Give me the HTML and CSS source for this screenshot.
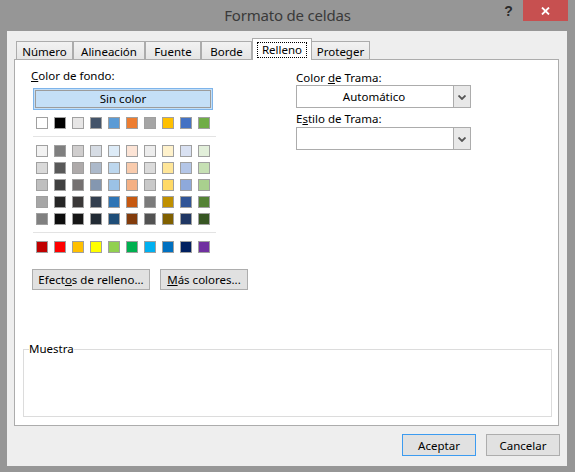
FILE: index.html
```html
<!DOCTYPE html>
<html lang="es">
<head>
<meta charset="utf-8">
<title>Formato de celdas</title>
<link rel="stylesheet" href="styles.css">
</head>
<body>
<div class="window">
  <div class="titlebar">
    <div></div>
    <div class="title">Formato de celdas</div>
    <div class="controls">
      <span class="help">?</span>
      <span class="close"><svg width="9" height="8" viewBox="0 0 9 8"><path d="M1 0.5 L8 7.5 M8 0.5 L1 7.5" stroke="#fff" stroke-width="1.8" fill="none"/></svg></span>
    </div>
  </div>
  <div class="client">
    <div class="tabs">
      <div class="tab t-num">Número</div>
      <div class="tab t-ali">Alineación</div>
      <div class="tab t-fue">Fuente</div>
      <div class="tab t-bor">Borde</div>
      <div class="tab active t-rel"><span class="focus">Relleno</span></div>
      <div class="tab t-pro">Proteger</div>
    </div>
    <div class="panel">
      <div class="top">
        <div class="left">
          <div class="label"><u>C</u>olor de fondo:</div>
          <div class="nocolor"><div class="nocolor-inner">Sin color</div></div>
          <div class="swatches row1">
            <span class="sw" style="background:#FFFFFF"></span>
            <span class="sw" style="background:#000000"></span>
            <span class="sw" style="background:#E7E6E6"></span>
            <span class="sw" style="background:#44546A"></span>
            <span class="sw" style="background:#5B9BD5"></span>
            <span class="sw" style="background:#ED7D31"></span>
            <span class="sw" style="background:#A5A5A5"></span>
            <span class="sw" style="background:#FFC000"></span>
            <span class="sw" style="background:#4472C4"></span>
            <span class="sw" style="background:#70AD47"></span>
          </div>
          <div class="sep"></div>
          <div class="swatches theme">
            <span class="sw" style="background:#F2F2F2"></span>
            <span class="sw" style="background:#7F7F7F"></span>
            <span class="sw" style="background:#D0CECE"></span>
            <span class="sw" style="background:#D6DCE4"></span>
            <span class="sw" style="background:#DDEBF7"></span>
            <span class="sw" style="background:#FCE4D6"></span>
            <span class="sw" style="background:#EDEDED"></span>
            <span class="sw" style="background:#FFF2CC"></span>
            <span class="sw" style="background:#D9E1F2"></span>
            <span class="sw" style="background:#E2EFDA"></span>

            <span class="sw" style="background:#D9D9D9"></span>
            <span class="sw" style="background:#595959"></span>
            <span class="sw" style="background:#AEAAAA"></span>
            <span class="sw" style="background:#ACB9CA"></span>
            <span class="sw" style="background:#BDD7EE"></span>
            <span class="sw" style="background:#F8CBAD"></span>
            <span class="sw" style="background:#DBDBDB"></span>
            <span class="sw" style="background:#FFE699"></span>
            <span class="sw" style="background:#B4C6E7"></span>
            <span class="sw" style="background:#C6E0B4"></span>

            <span class="sw" style="background:#BFBFBF"></span>
            <span class="sw" style="background:#404040"></span>
            <span class="sw" style="background:#757171"></span>
            <span class="sw" style="background:#8497B0"></span>
            <span class="sw" style="background:#9BC2E6"></span>
            <span class="sw" style="background:#F4B084"></span>
            <span class="sw" style="background:#C9C9C9"></span>
            <span class="sw" style="background:#FFD966"></span>
            <span class="sw" style="background:#8EA9DB"></span>
            <span class="sw" style="background:#A9D08E"></span>

            <span class="sw" style="background:#A6A6A6"></span>
            <span class="sw" style="background:#262626"></span>
            <span class="sw" style="background:#3A3838"></span>
            <span class="sw" style="background:#333F4F"></span>
            <span class="sw" style="background:#2F75B5"></span>
            <span class="sw" style="background:#C65911"></span>
            <span class="sw" style="background:#7B7B7B"></span>
            <span class="sw" style="background:#BF8F00"></span>
            <span class="sw" style="background:#305496"></span>
            <span class="sw" style="background:#548235"></span>

            <span class="sw" style="background:#808080"></span>
            <span class="sw" style="background:#0D0D0D"></span>
            <span class="sw" style="background:#161616"></span>
            <span class="sw" style="background:#222B35"></span>
            <span class="sw" style="background:#1F4E78"></span>
            <span class="sw" style="background:#833C0C"></span>
            <span class="sw" style="background:#525252"></span>
            <span class="sw" style="background:#806000"></span>
            <span class="sw" style="background:#203764"></span>
            <span class="sw" style="background:#375623"></span>
          </div>
          <div class="sep sep2"></div>
          <div class="swatches standard">
            <span class="sw" style="background:#C00000"></span>
            <span class="sw" style="background:#FF0000"></span>
            <span class="sw" style="background:#FFC000"></span>
            <span class="sw" style="background:#FFFF00"></span>
            <span class="sw" style="background:#92D050"></span>
            <span class="sw" style="background:#00B050"></span>
            <span class="sw" style="background:#00B0F0"></span>
            <span class="sw" style="background:#0070C0"></span>
            <span class="sw" style="background:#002060"></span>
            <span class="sw" style="background:#7030A0"></span>
          </div>
          <div class="btnrow">
            <div class="btn b-efectos">Efect<u>o</u>s de relleno...</div>
            <div class="btn b-mas"><u>M</u>ás colores...</div>
          </div>
        </div>
        <div class="right">
          <div class="label rlabel">Color <u>d</u>e Trama:</div>
          <div class="combo">
            <div class="combo-text">Automático</div>
            <div class="combo-arrow"><svg width="8" height="5" viewBox="0 0 8 5"><path d="M0.5 0.5 L4 4 L7.5 0.5" stroke="#555" stroke-width="1.8" fill="none"/></svg></div>
          </div>
          <div class="label rlabel2">E<u>s</u>tilo de Trama:</div>
          <div class="combo combo2">
            <div class="combo-text"></div>
            <div class="combo-arrow"><svg width="8" height="5" viewBox="0 0 8 5"><path d="M0.5 0.5 L4 4 L7.5 0.5" stroke="#555" stroke-width="1.8" fill="none"/></svg></div>
          </div>
        </div>
      </div>
      <fieldset class="sample">
        <legend>Muestra</legend>
        <div class="sample-body"></div>
      </fieldset>
    </div>
    <div class="footer">
      <div class="btn fbtn default">Aceptar</div>
      <div class="btn fbtn">Cancelar</div>
    </div>
  </div>
</div>
</body>
</html>
```
FILE: styles.css
```css
* { box-sizing: border-box; }
html, body { margin: 0; padding: 0; }
body {
  width: 575px;
  height: 472px;
  overflow: hidden;
  background: #969696;
  font-family: "Noto Sans", "Open Sans", sans-serif;
  font-size: 11.5px;
  color: #000;
}
.window {
  width: 575px;
  height: 472px;
  display: flex;
  flex-direction: column;
}
.titlebar {
  height: 31px;
  display: grid;
  grid-template-columns: 1fr auto 1fr;
  align-items: start;
}
.title {
  font-size: 15px;
  line-height: 30px;
  color: #3a3a3a;
  letter-spacing: -0.2px;
}
.controls {
  display: flex;
  justify-content: flex-end;
  align-items: flex-start;
  padding-right: 7px;
}
.help {
  width: 29px;
  height: 21px;
  display: flex;
  align-items: center;
  justify-content: center;
  font-weight: bold;
  font-size: 14px;
  color: #2b2b2b;
  font-family: "Liberation Sans", sans-serif;
}
.close {
  width: 45px;
  height: 21px;
  background: #c75050;
  display: flex;
  align-items: center;
  justify-content: center;
}
.client {
  margin: 0 8px 6px 7px;
  flex: 1;
  background: #eeeeee;
  display: flex;
  flex-direction: column;
}
.tabs {
  display: flex;
  align-items: flex-end;
  margin: 7px 0 0 9px;
  height: 21px;
  position: relative;
  z-index: 1;
}
.tab {
  height: 18px;
  border: 1px solid #acacac;
  border-bottom: none;
  background: linear-gradient(#f2f2f2, #e5e5e5);
  display: flex;
  align-items: center;
  justify-content: center;
  padding-top: 1px;
  white-space: nowrap;
}
.t-num { width: 57px; }
.t-ali { width: 72px; }
.t-fue { width: 56px; }
.t-bor { width: 51px; }
.t-rel { width: 60px; }
.t-pro { width: 59px; margin-left: -1px; }
.tab.active {
  height: 22px;
  margin-bottom: -1px;
  background: #fff;
  padding-top: 0;
}
.focus {
  display: inline-block;
  border: 1px dotted #000;
  padding: 0 4px;
  line-height: 14px;
}
.panel {
  margin-left: 7px;
  width: 545px;
  height: 367px;
  border: 1px solid #acacac;
  background: #fff;
  display: flex;
  flex-direction: column;
}
.top {
  display: grid;
  grid-template-columns: 265px 175px;
  padding: 8px 0 0 16px;
}
.label {
  line-height: 16px;
  height: 16px;
  white-space: nowrap;
}
.nocolor {
  margin: 4px 0 0 2px;
  width: 180px;
  height: 22px;
  border: 1px solid #7eb4ea;
  background: #c4dff7;
  padding: 1px;
}
.nocolor-inner {
  height: 18px;
  border: 1px solid #9c9c9c;
  text-align: center;
  line-height: 16px;
}
.swatches {
  display: grid;
  grid-template-columns: repeat(10, 12px);
  column-gap: 6px;
  row-gap: 5px;
  margin-left: 5px;
}
.row1 { margin-top: 7px; }
.theme { margin-top: 8px; }
.standard { margin-top: 8px; }
.sw {
  display: block;
  width: 12px;
  height: 12px;
  border: 1px solid #a0a0a0;
}
.sep {
  margin: 7px 0 0 2px;
  width: 183px;
  height: 1px;
  background: #e3e3e3;
}
.btnrow {
  display: flex;
  gap: 10px;
  margin: 16px 0 0 1px;
}
.btn {
  height: 21px;
  border: 1px solid #adadad;
  background: #e1e1e1;
  display: flex;
  align-items: center;
  justify-content: center;
  white-space: nowrap;
}
.b-efectos { width: 118px; }
.b-mas { width: 88px; }
.rlabel { margin-top: 2px; height: 15px; line-height: 15px; }
.rlabel2 { margin-top: 3px; height: 15px; line-height: 15px; }
.combo {
  height: 23px;
  border: 1px solid #acacac;
  display: flex;
  background: #fff;
}
.combo2 { margin-top: 1px; }
.combo-text {
  flex: 1;
  text-align: center;
  line-height: 21px;
  padding-right: 2px;
}
.combo-arrow {
  width: 17px;
  background: #e8e8e8;
  border-left: 1px solid #acacac;
  display: flex;
  align-items: center;
  justify-content: center;
  padding-top: 1px;
}
.sample {
  margin: auto 0 8px 8px;
  width: 529px;
  padding: 0;
  border: 1px solid #dcdcdc;
  min-width: 0;
}
.sample legend {
  padding: 0;
  margin-left: 5px;
  line-height: 16px;
}
.sample-body { height: 59px; }
.footer {
  display: flex;
  justify-content: flex-end;
  gap: 10px;
  margin-top: 8px;
  padding-right: 7px;
}
.fbtn {
  width: 74px;
  height: 22px;
}
.fbtn.default {
  border-color: #3c9bf0;
}
```
